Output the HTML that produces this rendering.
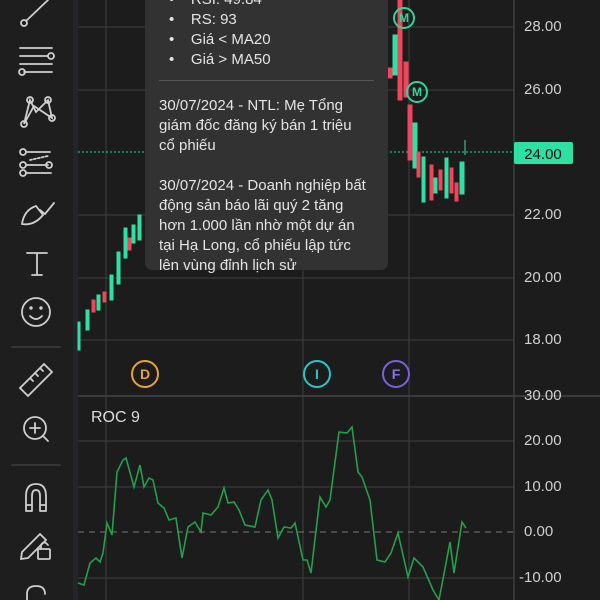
<!DOCTYPE html><html><head><meta charset="utf-8"><style>
body{margin:0;width:600px;height:600px;overflow:hidden;background:#1c1c1c;font-family:"Liberation Sans",sans-serif}
.tt{position:absolute;left:145px;top:-10px;width:243px;height:280px;background:#323232;border-radius:7px;color:#e4e4e4;font-size:15px;line-height:20px;white-space:nowrap}
.ax{position:absolute;left:524px;color:#d0d0d0;font-size:15px}
</style></head><body>
<svg width="600" height="600" style="position:absolute;left:0;top:0">
<rect x="0" y="0" width="73" height="600" fill="#1e1e1e"/>
<rect x="73" y="0" width="5" height="600" fill="#232528"/>
<g stroke="#3a3a3a" stroke-width="1.2">
<line x1="78" y1="27" x2="514" y2="27"/><line x1="78" y1="90" x2="514" y2="90"/><line x1="78" y1="215" x2="514" y2="215"/><line x1="78" y1="278" x2="514" y2="278"/><line x1="78" y1="340" x2="514" y2="340"/>
<line x1="78" y1="441" x2="514" y2="441"/><line x1="78" y1="487" x2="514" y2="487"/><line x1="78" y1="578" x2="514" y2="578"/>
<line x1="106" y1="0" x2="106" y2="600"/><line x1="303" y1="0" x2="303" y2="600"/><line x1="409" y1="0" x2="409" y2="600"/>
<line x1="514" y1="0" x2="514" y2="600" stroke="#444"/>
<line x1="78" y1="396" x2="600" y2="396" stroke="#444" stroke-width="1.5"/>
</g>
<line x1="78" y1="532" x2="514" y2="532" stroke="#777" stroke-dasharray="6,5"/>
<line x1="78" y1="152" x2="514" y2="152" stroke="#2fd69c" stroke-dasharray="2,2"/>
<g stroke-width="1">
<g fill="#2fe0a4" stroke="#2fe0a4">
<rect x="78" y="322" width="2" height="28"/><rect x="86" y="310" width="3" height="20"/><rect x="97" y="295" width="3" height="15"/><rect x="110" y="275" width="3" height="25"/><rect x="117" y="252" width="3" height="32"/><rect x="124" y="228" width="3" height="30"/><rect x="132" y="225" width="3" height="18"/><rect x="138" y="215" width="3" height="25"/>
<rect x="393" y="35" width="4" height="40"/><rect x="413" y="123" width="4" height="45"/><rect x="422" y="157" width="3" height="45"/><rect x="434" y="178" width="3" height="15"/><rect x="445" y="158" width="3" height="40"/><rect x="460" y="162" width="4" height="32"/><line x1="465" y1="140" x2="465" y2="155"/>
</g>
<g fill="#f0455a" stroke="#f0455a">
<rect x="92" y="300" width="3" height="12"/><rect x="103" y="292" width="3" height="10"/><rect x="128" y="238" width="3" height="12"/><rect x="388" y="68" width="4" height="10"/><rect x="398" y="0" width="4" height="100"/><rect x="404" y="62" width="4" height="35"/><rect x="408" y="105" width="4" height="55"/><rect x="417" y="152" width="3" height="25"/><rect x="430" y="165" width="3" height="35"/><rect x="439" y="170" width="3" height="20"/><rect x="450" y="168" width="3" height="25"/><rect x="455" y="183" width="3" height="18"/>
</g></g>
<g fill="none" stroke-width="2">
<circle cx="404" cy="18" r="10" stroke="#2fd69c"/><circle cx="417" cy="92" r="10" stroke="#2fd69c"/>
<circle cx="145" cy="374" r="13" stroke="#e7a33a"/><circle cx="317" cy="374" r="13" stroke="#2cc5c5"/><circle cx="396" cy="374" r="13" stroke="#7b5fe0"/>
</g>
<g font-family="Liberation Sans" font-weight="bold" text-anchor="middle" font-size="12">
<text x="404" y="22" fill="#2fd69c">M</text><text x="417" y="96" fill="#2fd69c">M</text>
<text x="145" y="379" fill="#e7a33a" font-size="14">D</text><text x="317" y="379" fill="#2cc5c5" font-size="14">I</text><text x="396" y="379" fill="#8a70f0" font-size="14">F</text>
</g>
<polyline fill="none" stroke="#23a04a" stroke-width="1.6" points="78,583 84,585 90,563 96,558 100,562 103,553 107,523 112,535 117,472 123,460 126,458 134,487 140,465 144,487 149,478 153,480 158,503 164,508 169,520 176,518 182,558 188,527 195,522 201,532 203,513 211,515 218,507 224,488 228,503 234,502 239,510 245,525 255,527 261,500 268,490 272,500 278,538 284,527 291,528 295,523 303,560 307,560 311,573 320,497 326,507 330,500 339,432 347,433 352,427 358,472 362,477 370,500 377,560 385,562 391,553 398,533 408,577 414,558 423,567 433,590 439,600 450,542 454,573 462,522 466,528"/>
<rect x="514" y="142" width="59" height="22" rx="2" fill="#2fe0a4"/>
<text x="543" y="159" text-anchor="middle" font-size="15" fill="#111" font-family="Liberation Sans">24.00</text>
<text x="91" y="422" font-size="16" fill="#ddd" font-family="Liberation Sans">ROC 9</text>
<g fill="none" stroke="#cfcfcf" stroke-width="1.8" stroke-linecap="round">
<line x1="26" y1="21" x2="48" y2="0"/><circle cx="24" cy="23" r="3"/>
<line x1="20" y1="48" x2="52" y2="48"/><line x1="20" y1="56" x2="48" y2="56"/><line x1="20" y1="64" x2="52" y2="64"/><line x1="24" y1="72" x2="52" y2="72"/><circle cx="51" cy="56" r="3"/><circle cx="22" cy="72" r="3"/>
<path d="M24 124 L30 100 L36 112 L48 100 L52 118 L34 106 Z"/><circle cx="24" cy="124" r="3"/><circle cx="30" cy="100" r="3"/><circle cx="48" cy="100" r="3"/><circle cx="52" cy="118" r="3"/>
<circle cx="23" cy="152" r="3"/><line x1="27" y1="152" x2="50" y2="152"/><circle cx="23" cy="165" r="3"/><line x1="27" y1="165" x2="48" y2="165"/><circle cx="49" cy="165" r="3"/><circle cx="23" cy="173" r="3"/><line x1="27" y1="173" x2="51" y2="173"/><path d="M30 160 L48 156" stroke-dasharray="2,2"/>
<path d="M22 224 Q24 210 36 206 L43 215 Q34 226 22 224 Z M40 210 L45 214 L54 203"/>
<path d="M27 253 H47 M37 253 V275 M32 275 H42"/>
<circle cx="36" cy="312" r="14"/><circle cx="31" cy="308" r="0.8"/><circle cx="41" cy="308" r="0.8"/><path d="M30 316 Q36 322 42 316"/>
<line x1="12" y1="347" x2="60" y2="347" stroke="#3a3a3a"/>
<path d="M20 388 L44 364 L52 372 L28 396 Z M30 378 L33 381 M35 373 L38 376 M40 368 L43 371"/>
<circle cx="35" cy="428" r="11"/><path d="M35 423 V433 M30 428 H40 M43 436 L48 441"/>
<line x1="12" y1="465" x2="60" y2="465" stroke="#3a3a3a"/>
<path d="M26 511 V496 Q26 484 36 484 Q46 484 46 496 V511 M26 505 H32 M40 505 H46 M32 511 V496 Q32 490 36 490 Q40 490 40 496 V511 M26 511 H32 M40 511 H46"/>
<path d="M22 552 L40 534 L46 540 L28 558 L21 559 Z"/><rect x="38" y="549" width="12" height="10" rx="1"/><path d="M41 549 V545 Q44 540 48 545"/>
<path d="M27 600 V594 Q27 586 36 586 Q45 586 45 594"/>
</g>
</svg>
<div class="tt">
<div style="position:absolute;left:24px;top:0">•&nbsp;&nbsp;&nbsp; RSI: 49.84<br>•&nbsp;&nbsp;&nbsp; RS: 93<br>•&nbsp;&nbsp;&nbsp; Giá &lt; MA20<br>•&nbsp;&nbsp;&nbsp; Giá &gt; MA50</div>
<div style="position:absolute;left:14px;right:14px;top:90px;height:1px;background:#555"></div>
<div style="position:absolute;left:14px;top:106px">30/07/2024 - NTL: Mẹ Tổng<br>giám đốc đăng ký bán 1 triệu<br>cổ phiếu<br><br>30/07/2024 - Doanh nghiệp bất<br>động sản báo lãi quý 2 tăng<br>hơn 1.000 lần nhờ một dự án<br>tại Hạ Long, cổ phiếu lập tức<br>lên vùng đỉnh lịch sử</div>
</div>
<div class="ax" style="top:18px">28.00</div><div class="ax" style="top:81px">26.00</div><div class="ax" style="top:206px">22.00</div><div class="ax" style="top:269px">20.00</div><div class="ax" style="top:331px">18.00</div>
<div class="ax" style="top:387px">30.00</div><div class="ax" style="top:432px">20.00</div><div class="ax" style="top:478px">10.00</div><div class="ax" style="top:523px">0.00</div><div class="ax" style="top:569px;left:519px">-10.00</div>
</body></html>
